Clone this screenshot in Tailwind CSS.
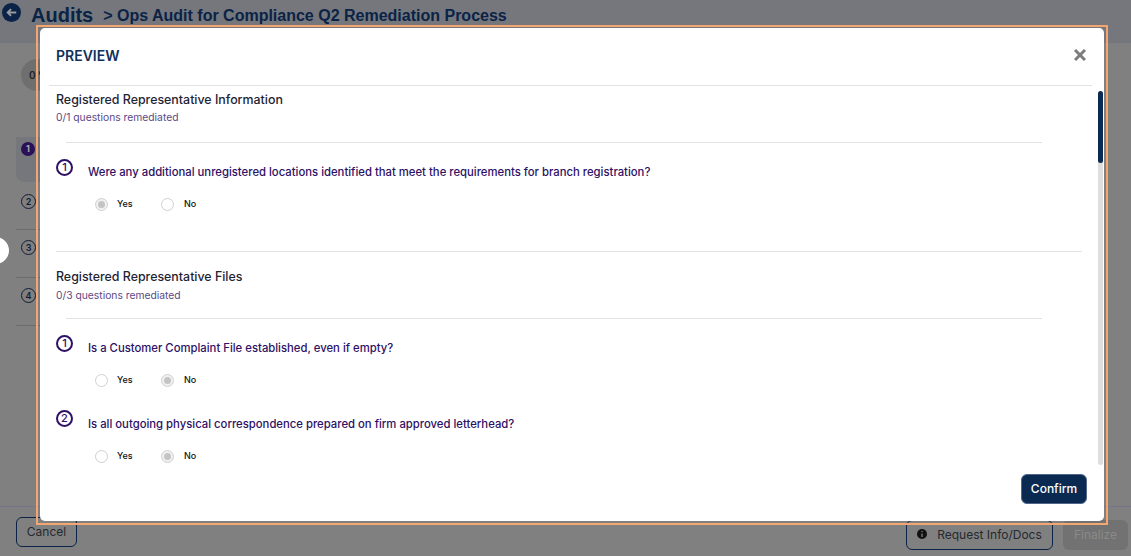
<!DOCTYPE html>
<html lang="en">
  <head>
    <meta charset="UTF-8" />
    <title>Audits</title>
    <script src="https://cdn.jsdelivr.net/npm/@tailwindcss/browser@4"></script>
  </head>
  <body class="relative h-[556px] w-[1131px] overflow-hidden bg-[#808080] font-['Inter',sans-serif]">
    <!--page behind the modal-->
    <header class="flex h-[43px] items-start gap-[10px] bg-[#75777c] pl-[2px] text-[#0a2347]">
      <svg class="mt-[3px] h-[19px] w-[19px]" viewBox="0 0 20 20">
        <circle cx="10" cy="10" r="10" fill="#0a2347" />
        <path d="M15 10H6M9.500 6.500 6 10l3.500 3.500" fill="none" stroke="#9a9ca0" stroke-width="2" />
      </svg>
      <span class="font-['Liberation_Sans',sans-serif] text-[20px] leading-[30px] font-bold">Audits</span>
      <span class="font-['Liberation_Sans',sans-serif] text-[16px] leading-[32px] font-bold">&gt; Ops Audit for Compliance Q2 Remediation Process</span>
    </header>
    <div class="absolute left-[21px] top-[59px] flex h-[32px] w-[32px] items-center rounded-full bg-[#6f6f6f] pl-[8px] text-[10px] font-semibold text-[#222]">0 %</div>
    <aside class="absolute left-[16px] top-[137px] w-[24px] text-[#111b33]">
      <div class="h-[45px] rounded-bl-[8px] bg-[#75777c] pl-[5px] pt-[5px]">
        <div class="flex h-[14px] w-[14px] items-center justify-center rounded-full bg-[#2a1058] text-[9px] font-bold text-[#aaa]">1</div>
      </div>
      <div class="h-[48px] border-b border-[#6c6c6c] pl-[5px] pt-[12px]">
        <div class="flex h-[15px] w-[15px] items-center justify-center rounded-full border border-[#111b33] text-[9px] font-semibold">2</div>
      </div>
      <div class="h-[48px] border-b border-[#6c6c6c] pl-[5px] pt-[10px]">
        <div class="flex h-[15px] w-[15px] items-center justify-center rounded-full border border-[#111b33] text-[9px] font-semibold">3</div>
      </div>
      <div class="h-[48px] border-b border-[#6c6c6c] pl-[5px] pt-[10px]">
        <div class="flex h-[15px] w-[15px] items-center justify-center rounded-full border border-[#111b33] text-[9px] font-semibold">4</div>
      </div>
    </aside>
    <div class="absolute left-[-18px] top-[237px] h-[27px] w-[27px] rounded-full bg-white"></div>
    <footer class="absolute left-0 top-[506px] flex h-[50px] w-full items-start border-t border-[#76748a] pl-[16px] pr-[3px] pt-[10px] text-[12px] text-[#26292f]">
      <button class="h-[30px] w-[61px] rounded-[6px] border border-[#0a2347]">Cancel</button>
      <button class="ml-auto mt-[3px] flex h-[30px] w-[147px] items-center justify-center gap-[10px] rounded-[6px] border border-[#0a2347]">
        <svg class="mt-[-3px] h-[10px] w-[10px]" viewBox="0 0 10 10">
          <circle cx="5" cy="5" r="5" fill="#111" />
          <path d="M5 2v1M5 4.500V8" stroke="#808080" stroke-width="1.300" />
        </svg>
        Request Info/Docs
      </button>
      <button class="ml-[10px] mt-[3px] h-[30px] w-[65px] rounded-[6px] bg-[#727272] text-[#8a8a8a]">Finalize</button>
    </footer>

    <!--preview modal-->
    <div class="absolute left-[36px] top-[25px] h-[500px] w-[1072px] border-2 border-[#f4a671] pl-[2px] pt-[1px]">
      <div class="relative flex h-[493px] w-[1064px] flex-col rounded-[5px] bg-white pl-[9px]">
        <div class="mr-[12px] flex h-[58px] shrink-0 items-center justify-between border-b border-[#e3e3e3] pb-[3px] pl-[7px]">
          <h2 class="text-[14px] font-semibold text-[#0f2f5c]">PREVIEW</h2>
          <svg class="mr-[6px] h-[12px] w-[12px]" viewBox="0 0 12 12">
            <path d="M1 1l10 10M11 1 1 11" stroke="#7d7d7d" stroke-width="3" />
          </svg>
        </div>
        <div class="relative h-[380px] shrink-0 overflow-hidden pl-[7px] pr-[22px]">
          <section class="border-b border-[#e3e3e3] pb-[38px]">
            <h3 class="pt-[6px] text-[12.400px] leading-[16px] font-medium text-[#1f2433]">Registered Representative Information</h3>
            <p class="pt-[3px] text-[10.300px] leading-[13px] text-[#5b4a86]">0/1 questions remediated</p>
            <div class="mx-[10px] mb-[16px] mt-[18px] mr-[40px] border-t border-[#e3e3e3]"></div>
            <div class="flex h-[18px] items-start gap-[15px] text-[11.300px] font-medium text-[#2e1065]">
              <span class="flex h-[17px] w-[17px] shrink-0 items-center justify-center rounded-full border-2 border-[#2e1065] text-[11px]">1</span>
              <span class="pt-[5px] leading-[16px]">Were any additional unregistered locations identified that meet the requirements for branch registration?</span>
            </div>
            <div class="mt-[18px] flex h-[18px] items-center pl-[39px] text-[9px] font-medium text-[#111]">
              <span class="flex h-[13px] w-[13px] items-center justify-center rounded-full border border-[#d0d0d0] bg-[#f1f1f1]"><span class="h-[7px] w-[7px] rounded-full bg-[#c4c4c4]"></span></span>
              <span class="ml-[9px] w-[44px]">Yes</span>
              <span class="h-[13px] w-[13px] rounded-full border border-[#d0d0d0]"></span>
              <span class="ml-[10px]">No</span>
            </div>
          </section>
          <section>
            <h3 class="pt-[17px] text-[12.400px] leading-[16px] font-medium text-[#1f2433]">Registered Representative Files</h3>
            <p class="pt-[4px] text-[10.300px] leading-[13px] text-[#5b4a86]">0/3 questions remediated</p>
            <div class="mx-[10px] mb-[16px] mt-[16px] mr-[40px] border-t border-[#e3e3e3]"></div>
            <div class="flex h-[18px] items-start gap-[15px] text-[11.300px] font-medium text-[#2e1065]">
              <span class="flex h-[17px] w-[17px] shrink-0 items-center justify-center rounded-full border-2 border-[#2e1065] text-[11px]">1</span>
              <span class="pt-[5px] leading-[16px]">Is a Customer Complaint File established, even if empty?</span>
            </div>
            <div class="mt-[18px] flex h-[18px] items-center pl-[39px] text-[9px] font-medium text-[#111]">
              <span class="h-[13px] w-[13px] rounded-full border border-[#d0d0d0]"></span>
              <span class="ml-[9px] w-[44px]">Yes</span>
              <span class="flex h-[13px] w-[13px] items-center justify-center rounded-full border border-[#d0d0d0] bg-[#f1f1f1]"><span class="h-[7px] w-[7px] rounded-full bg-[#c4c4c4]"></span></span>
              <span class="ml-[10px]">No</span>
            </div>
            <div class="mt-[21px] flex h-[18px] items-start gap-[15px] text-[11.300px] font-medium text-[#2e1065]">
              <span class="flex h-[17px] w-[17px] shrink-0 items-center justify-center rounded-full border-2 border-[#2e1065] text-[11px]">2</span>
              <span class="pt-[6px] leading-[16px]">Is all outgoing physical correspondence prepared on firm approved letterhead?</span>
            </div>
            <div class="mt-[19px] flex h-[18px] items-center pl-[39px] text-[9px] font-medium text-[#111]">
              <span class="h-[13px] w-[13px] rounded-full border border-[#d0d0d0]"></span>
              <span class="ml-[9px] w-[44px]">Yes</span>
              <span class="flex h-[13px] w-[13px] items-center justify-center rounded-full border border-[#d0d0d0] bg-[#f1f1f1]"><span class="h-[7px] w-[7px] rounded-full bg-[#c4c4c4]"></span></span>
              <span class="ml-[10px]">No</span>
            </div>
          </section>
        </div>
        <!--scrollbar-->
        <div class="absolute right-[1px] top-[63px] h-[374px] w-[5px] rounded-full bg-[#dedede]">
          <div class="h-[72px] rounded-full bg-[#0b2a52]"></div>
        </div>
        <div class="flex justify-end pr-[17px] pt-[8px]">
          <button class="h-[30px] w-[66px] rounded-[6px] border border-[#52668a] bg-[#0b2a52] text-[12px] font-medium text-white">Confirm</button>
        </div>
      </div>
    </div>
  </body>
</html>
